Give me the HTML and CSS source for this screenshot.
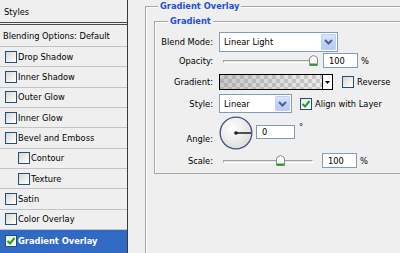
FILE: index.html
```html
<!DOCTYPE html>
<html>
<head>
<meta charset="utf-8">
<link rel="stylesheet" href="styles.css">
</head>
<body>
<div class="app">
  <aside class="styles">
    <div class="hdr">Styles</div>
    <div class="row blend">Blending Options: Default</div>
    <div class="row"><span class="cb"></span>Drop Shadow</div>
    <div class="row"><span class="cb"></span>Inner Shadow</div>
    <div class="row"><span class="cb"></span>Outer Glow</div>
    <div class="row"><span class="cb"></span>Inner Glow</div>
    <div class="row"><span class="cb"></span>Bevel and Emboss</div>
    <div class="row sub"><span class="cb"></span>Contour</div>
    <div class="row sub"><span class="cb"></span>Texture</div>
    <div class="row"><span class="cb"></span>Satin</div>
    <div class="row"><span class="cb"></span>Color Overlay</div>
    <div class="row sel"><span class="cb on"><svg viewBox="0 0 10 10" width="10" height="10"><path d="M1.5 5 L4 7.5 L8.5 2" fill="none" stroke="#21a121" stroke-width="2"/></svg></span>Gradient Overlay</div>
  </aside>
  <main class="panel">
    <fieldset class="grp outer">
      <legend>Gradient Overlay</legend>
      <fieldset class="grp inner">
        <legend>Gradient</legend>
        <div class="frow r1">
          <span class="lbl">Blend Mode:</span>
          <div class="combo c-blend"><span class="val">Linear Light</span><span class="arr"><svg viewBox="0 0 9 6" width="9" height="6"><path d="M1 1 L4.5 4.5 L8 1" fill="none" stroke="#4d6185" stroke-width="2"/></svg></span></div>
        </div>
        <div class="frow r2">
          <span class="lbl">Opacity:</span>
          <div class="slider"><span class="track"></span><span class="thumb t-op"><svg viewBox="0 0 9 11" width="9" height="11"><path d="M0.5 10.5 V4 Q0.5 1.5 4.5 0.5 Q8.5 1.5 8.5 4 V10.5 Z" fill="#fbfbf9" stroke="#8a8a8a"/><path d="M1 9.5 H8" stroke="#21a121" stroke-width="2"/></svg></span></div>
          <span class="num">100</span><span class="unit">%</span>
        </div>
        <div class="frow r3">
          <span class="lbl">Gradient:</span>
          <div class="gsw"><span class="chk"></span><span class="garr"><svg viewBox="0 0 5 3" width="5" height="3"><path d="M0 0 H5 L2.5 3 Z" fill="#000"/></svg></span></div>
          <span class="cb rev"></span><span class="ctext">Reverse</span>
        </div>
        <div class="frow r4">
          <span class="lbl">Style:</span>
          <div class="combo c-style"><span class="val">Linear</span><span class="arr"><svg viewBox="0 0 9 6" width="9" height="6"><path d="M1 1 L4.5 4.5 L8 1" fill="none" stroke="#4d6185" stroke-width="2"/></svg></span></div>
          <span class="cb on align"><svg viewBox="0 0 10 10" width="10" height="10"><path d="M1.5 5 L4 7.5 L8.5 2" fill="none" stroke="#21a121" stroke-width="2"/></svg></span><span class="ctext">Align with Layer</span>
        </div>
        <div class="frow r5">
          <span class="lbl">Angle:</span>
          <svg class="dial" viewBox="0 0 34 34" width="34" height="34">
            <defs><radialGradient id="dg" cx="0.4" cy="0.35" r="0.7"><stop offset="0" stop-color="#ffffff"/><stop offset="1" stop-color="#dcdcdc"/></radialGradient></defs>
            <circle cx="17" cy="17" r="15.8" fill="url(#dg)" stroke="#42527e" stroke-width="1.3"/>
            <path d="M17 17 H32" stroke="#2a2a2a" stroke-width="1.6"/>
            <circle cx="17" cy="17" r="1.8" fill="#1a1a1a"/>
          </svg>
          <span class="num n-ang">0</span><span class="deg">°</span>
        </div>
        <div class="frow r6">
          <span class="lbl">Scale:</span>
          <div class="slider"><span class="track"></span><span class="thumb t-sc"><svg viewBox="0 0 9 11" width="9" height="11"><path d="M0.5 10.5 V4 Q0.5 1.5 4.5 0.5 Q8.5 1.5 8.5 4 V10.5 Z" fill="#fbfbf9" stroke="#8a8a8a"/><path d="M1 9.5 H8" stroke="#21a121" stroke-width="2"/></svg></span></div>
          <span class="num n-sc">100</span><span class="unit">%</span>
        </div>
      </fieldset>
    </fieldset>
  </main>
</div>
</body>
</html>
```
FILE: styles.css
```css
* { box-sizing: border-box; }
html, body { margin: 0; padding: 0; }
body {
  width: 400px; height: 253px; overflow: hidden;
  background: #efefef;
  font-family: "DejaVu Sans", "Verdana", sans-serif;
  font-size: 8.3px; line-height: 12px; color: #000;
}
.app { display: flex; width: 400px; height: 253px; }

.styles {
  width: 128px; flex: none; height: 253px;
  border-right: 1px solid #3a3a3a;
  background: #efefef;
  display: flex; flex-direction: column;
}
.hdr {
  height: 25px; padding: 6px 4px 0;
  border-bottom: 3px double #4a4a4a;
}
.row {
  height: 20.33px; flex: none;
  display: flex; align-items: center;
  padding-left: 5px;
  border-bottom: 1px solid #c4c4c4;
}
.row.blend { height: 22px; padding-left: 3px; }
.row.sub { padding-left: 18px; }
.row.sel {
  background: #316ac5; color: #fff; font-weight: bold;
  border-bottom: none; flex: 1;
}
.cb {
  width: 12px; height: 12px; flex: none;
  border: 1px solid #1f4f7e;
  background: linear-gradient(135deg, #d8d8d2 0%, #f4f4f0 70%, #ffffff 100%);
  margin-right: 1px;
  display: inline-flex; align-items: center; justify-content: center;
}
.cb.on { background: linear-gradient(135deg, #e6e6e0 0%, #ffffff 80%); }
.cb svg { display: block; }

.panel {
  flex: 1; min-width: 0; overflow: hidden;
  padding-left: 17px;
}
.grp {
  margin: 0; padding: 0; min-width: 0;
  border: 1px solid #a7a7a2;
  box-shadow: inset 1px 1px 0 #ffffff;
}
.grp > legend {
  padding: 0 2px; line-height: 12px; height: 12px;
  font-weight: bold; color: #1f4fd6;
  background: #efefef;
}
.outer { width: 300px; height: 300px; }
.outer > legend { margin-left: 12px; }
.inner { width: 300px; margin: 3px 0 0 8px; padding: 5px 0 5px 0; }
.inner > legend { margin-left: 13px; }

.frow { display: flex; align-items: center; }
.lbl { width: 58px; flex: none; text-align: right; margin-right: 6px; }
.r1 { height: 20px; }
.r2 { height: 15px; margin-top: 1px; }
.r3 { height: 16px; margin-top: 6px; }
.r4 { height: 19px; margin-top: 4px; }
.r5 { height: 34px; margin-top: 3px; align-items: flex-start; }
.r5 .lbl { margin-top: 17px; }
.r6 { height: 15px; margin-top: 3px; }

.combo {
  height: 100%; display: flex; align-items: stretch;
  border: 1px solid #7f9db9; background: #fff;
  padding: 1px;
}
.c-blend { width: 119px; }
.c-style { width: 73px; }
.combo .val { flex: 1; padding-left: 3px; display: flex; align-items: center; }
.combo .arr {
  width: 15px; flex: none;
  background: linear-gradient(180deg, #dbe5fd 0%, #c3d3fb 50%, #b6c9f7 100%);
  border: 1px solid #c0d0f4; border-radius: 1px;
  display: flex; align-items: center; justify-content: center;
}
.combo .arr svg { display: block; }

.slider { position: relative; width: 100px; height: 15px; flex: none; }
.track {
  position: absolute; left: 4px; top: 7px; width: 90px; height: 3px;
  border-top: 1px solid #a0a0a0; border-left: 1px solid #a0a0a0;
  border-bottom: 1px solid #ffffff; border-right: 1px solid #ffffff;
  background: #e4e4e0; border-radius: 1px;
}
.thumb { position: absolute; top: 2px; width: 9px; height: 11px; }
.thumb svg { display: block; }
.t-op { left: 90px; }
.t-sc { left: 57px; }
.num {
  width: 35px; height: 15px; flex: none;
  border: 1px solid #7f9db9; background: #fff;
  padding-left: 5px; display: flex; align-items: center;
  margin-left: 4px;
}
.n-sc { margin-left: 3px; }
.unit { margin-left: 3px; }

.gsw {
  width: 114px; height: 16px; flex: none;
  border: 1px solid #000; display: flex; background: #fff;
}
.chk {
  flex: 1; border-right: 1px solid #000;
  background-color: #f2f2f2;
  background-image:
    linear-gradient(90deg, rgba(110,110,110,0.3), rgba(110,110,110,0.05)),
    linear-gradient(45deg, #cdcdcd 25%, transparent 25%, transparent 75%, #cdcdcd 75%),
    linear-gradient(45deg, #cdcdcd 25%, transparent 25%, transparent 75%, #cdcdcd 75%);
  background-size: 100% 100%, 8px 8px, 8px 8px;
  background-position: 0 0, 0 0, 4px 4px;
}
.garr { width: 9px; flex: none; display: flex; align-items: center; justify-content: center; }
.garr svg { display: block; }
.rev { margin-left: 9px; width: 12px; height: 12px; }
.align { margin-left: 8px; }
.ctext { margin-left: 2px; }

.dial { display: block; flex: none; margin-top: 0; }
.n-ang { width: 39px; height: 14px; margin-left: 3px; margin-top: 9px; }
.deg { margin-left: 4px; margin-top: 5px; }
```
